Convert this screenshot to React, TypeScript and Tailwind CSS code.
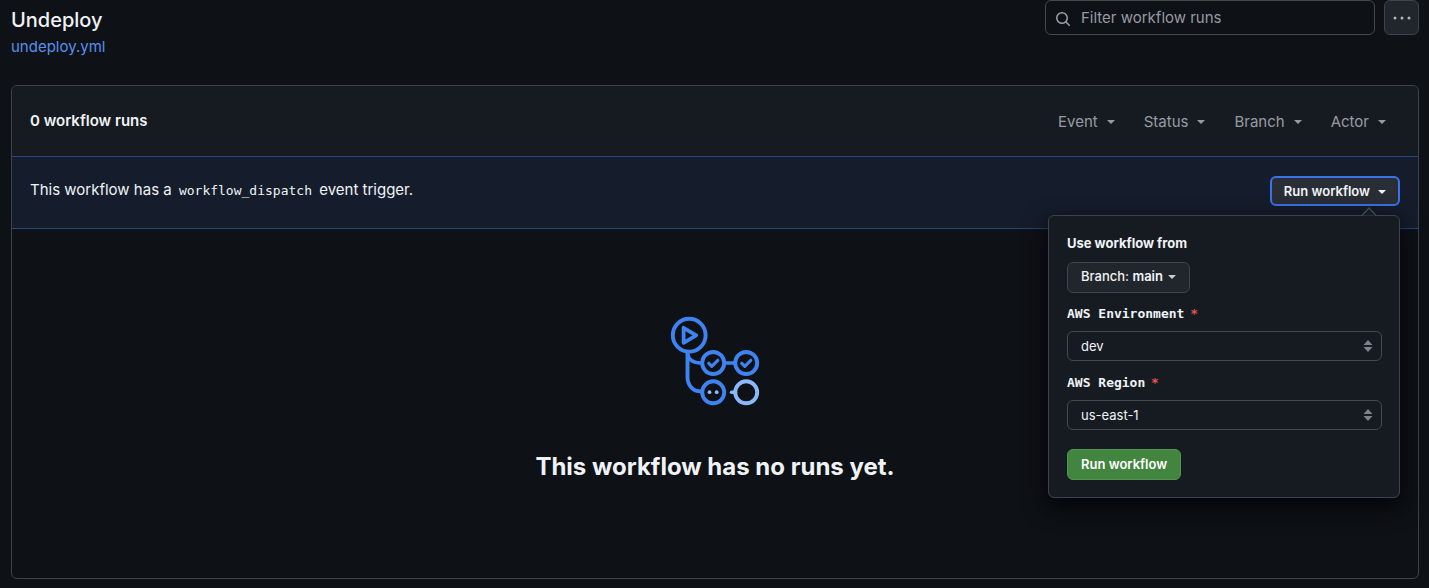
import React from "react";

function Caret({ className = "" }: { className?: string }) {
  return (
    <svg aria-hidden="true" viewBox="0 0 8 4" className={`h-1 w-2 shrink-0 fill-current ${className}`}>
      <path d="M0 0h8L4 4z" />
    </svg>
  );
}

function WorkflowIllustration() {
  return (
    <svg aria-hidden="true" viewBox="0 0 90 90" className="size-[90px]" fill="none" strokeLinecap="round" strokeLinejoin="round">
      <g stroke="#3f83f3" strokeWidth="3.9">
        <circle cx="19.2" cy="19.2" r="16.4" />
        <path d="M13.6 11.8v15l12.6-7.5z" strokeWidth="3.8" />
        <path d="M17.5 36v25c0 8 5 14.5 13.5 14.5" strokeLinecap="butt" />
        <path d="M17.5 37.5c1 6 5 9.500 13.500 9.500M55 47h10" strokeLinecap="butt" strokeWidth="3.5" />
        <circle cx="43.2" cy="47" r="11" />
        <circle cx="76.2" cy="47" r="11" />
        <circle cx="43.2" cy="76.3" r="11" />
        <path d="M38.8 47.300l3 3 6-6M71.800 47.300l3 3 6-6" strokeWidth="3.2" />
      </g>
      <g fill="#8ab8fa">
        <circle cx="39.5" cy="76.2" r="1.9" />
        <circle cx="46.7" cy="76.2" r="1.9" />
      </g>
      <path d="M61.5 76.3h4" stroke="#8ab8fa" strokeWidth="3.4" />
      <circle cx="76.2" cy="76.3" r="11" stroke="#8ab8fa" strokeWidth="3.9" />
    </svg>
  );
}

function SelectField({ id, label, options }: { id: string; label: string; options: string[] }) {
  return (
    <div className="flex flex-col gap-[7px]">
      <label htmlFor={id} className="font-['DejaVu_Sans_Mono',monospace] text-[13px] leading-5 font-bold">
        {label} <span className="-ml-0.5 text-[#e5534b]">*</span>
      </label>
      <div className="relative">
        <select
          id={id}
          className="block h-[30px] w-full appearance-none rounded-md border border-[#444950] bg-[#161b22] px-[13px] pt-0.5 text-[13px] text-[#f0f3f6]"
        >
          {options.map((option) => (
            <option key={option}>{option}</option>
          ))}
        </select>
        <svg
          aria-hidden="true"
          viewBox="0 0 10 12"
          className="pointer-events-none absolute top-[9px] right-[9px] h-3 w-2.5 fill-[#7d828b]"
        >
          <path d="M5 0l4.500 5h-9zM5 12l4.500-5h-9z" />
        </svg>
      </div>
    </div>
  );
}

function RunWorkflowMenu() {
  return (
    <div className="relative">
      <button
        type="button"
        aria-expanded="true"
        className="flex h-[30px] items-center gap-2 rounded-md border-2 border-[#3a72ea] bg-[#292e36] px-3 pt-0.5 text-[13px] font-semibold text-[#f0f3f6]"
      >
        Run workflow
        <Caret />
      </button>
      <div className="absolute top-[39px] right-0 z-10 w-[352px] rounded-md border border-[#3d434b] bg-[#161b22] py-[17px] pr-[17px] pl-[18px] shadow-[0_8px_24px_#010409]">
        <svg aria-hidden="true" viewBox="0 0 16 9" className="absolute -top-[9px] right-[22px] h-[9px] w-4">
          <path d="M1 8.500L8 1l7 7.500" fill="#161b22" stroke="#444950" strokeWidth="1.3" />
        </svg>
        <p className="text-[13px] leading-5 font-bold">Use workflow from</p>
        <button
          type="button"
          className="mt-[9px] flex h-[31px] items-center gap-[5px] rounded-md border border-[#3f454d] bg-[#21262d] px-[13px] text-[13px] font-medium"
        >
          <span>
            Branch: <span className="font-semibold">main</span>
          </span>
          <Caret className="text-[#c9cdd3]" />
        </button>
        <form className="mt-[11px]">
          <div className="flex flex-col gap-3">
            <SelectField id="environment" label="AWS Environment" options={["dev"]} />
            <SelectField id="region" label="AWS Region" options={["us-east-1"]} />
          </div>
          <button
            type="button"
            className="mt-[19px] h-[31px] rounded-md border border-[#529450] bg-[#42853e] px-[13px] pt-0.5 text-[13px] font-semibold text-white"
          >
            Run workflow
          </button>
        </form>
      </div>
    </div>
  );
}

export default function App() {
  return (
    <main className="min-h-screen bg-[#0e1116] px-[11px] pr-2.5 pb-[9px] font-[Inter,sans-serif] text-[#f0f3f6]">
      <header className="flex items-start justify-between">
        <div className="pt-1.5">
          <h1 className="text-[20px] leading-7 font-medium">Undeploy</h1>
          <a href="#undeploy" className="block text-[15px] leading-[26px] text-[#5890ed]">
            undeploy.yml
          </a>
        </div>
        <div className="flex gap-[9px]">
          <label className="flex h-[35px] w-[330px] items-center gap-2.5 rounded-md border border-[#444950] px-[9px] pt-0.5 text-[#9ba1a9]">
            <svg aria-hidden="true" viewBox="0 0 16 16" className="size-4 shrink-0 fill-current">
              <path d="M10.680 11.740a6 6 0 0 1-7.922-8.982 6 6 0 0 1 8.982 7.922l3.040 3.040a.749.749 0 0 1-.326 1.275.749.749 0 0 1-.734-.215ZM11.500 7a4.499 4.499 0 1 0-8.997 0A4.499 4.499 0 0 0 11.500 7Z" />
            </svg>
            <input
              type="search"
              aria-label="Filter workflow runs"
              placeholder="Filter workflow runs"
              className="min-w-0 flex-1 bg-transparent text-[15px] outline-none placeholder:text-[#969ba2]"
            />
          </label>
          <button
            type="button"
            aria-label="More options"
            className="flex size-[35px] items-center justify-center rounded-md border border-[#3d434b] bg-[#21262d] text-[#aeb4bb]"
          >
            <svg aria-hidden="true" viewBox="0 0 18 4" className="h-1 w-[18px] fill-current">
              <circle cx="2" cy="2" r="1.5" />
              <circle cx="9" cy="2" r="1.5" />
              <circle cx="16" cy="2" r="1.5" />
            </svg>
          </button>
        </div>
      </header>

      <section className="mt-[25px] rounded-md border border-[#3d434b]">
        <div className="flex h-[70px] items-center justify-between rounded-t-md bg-[#161b22] px-[18px]">
          <h2 className="text-[15px] font-semibold">0 workflow runs</h2>
          <div className="flex gap-[29px] pt-0.5 pr-3.5 text-[15px] text-[#969ba2]">
            {["Event", "Status", "Branch", "Actor"].map((name) => (
              <button key={name} type="button" className="flex items-center gap-[9px]">
                {name}
                <Caret />
              </button>
            ))}
          </div>
        </div>
        <div className="flex h-[73px] items-center justify-between border-y border-[#28457f] bg-[#151d2c] px-[18px] pb-1">
          <p className="text-[15px]">
            This workflow has a{" "}
            <code className="mx-[3px] font-['DejaVu_Sans_Mono',monospace] text-[13px]">workflow_dispatch</code> event
            trigger.
          </p>
          <RunWorkflowMenu />
        </div>
        <div className="flex flex-col items-center gap-[42px] pt-[87px] pb-[92px]">
          <WorkflowIllustration />
          <h3 className="text-[24px] leading-[38px] font-bold">This workflow has no runs yet.</h3>
        </div>
      </section>
    </main>
  );
}
